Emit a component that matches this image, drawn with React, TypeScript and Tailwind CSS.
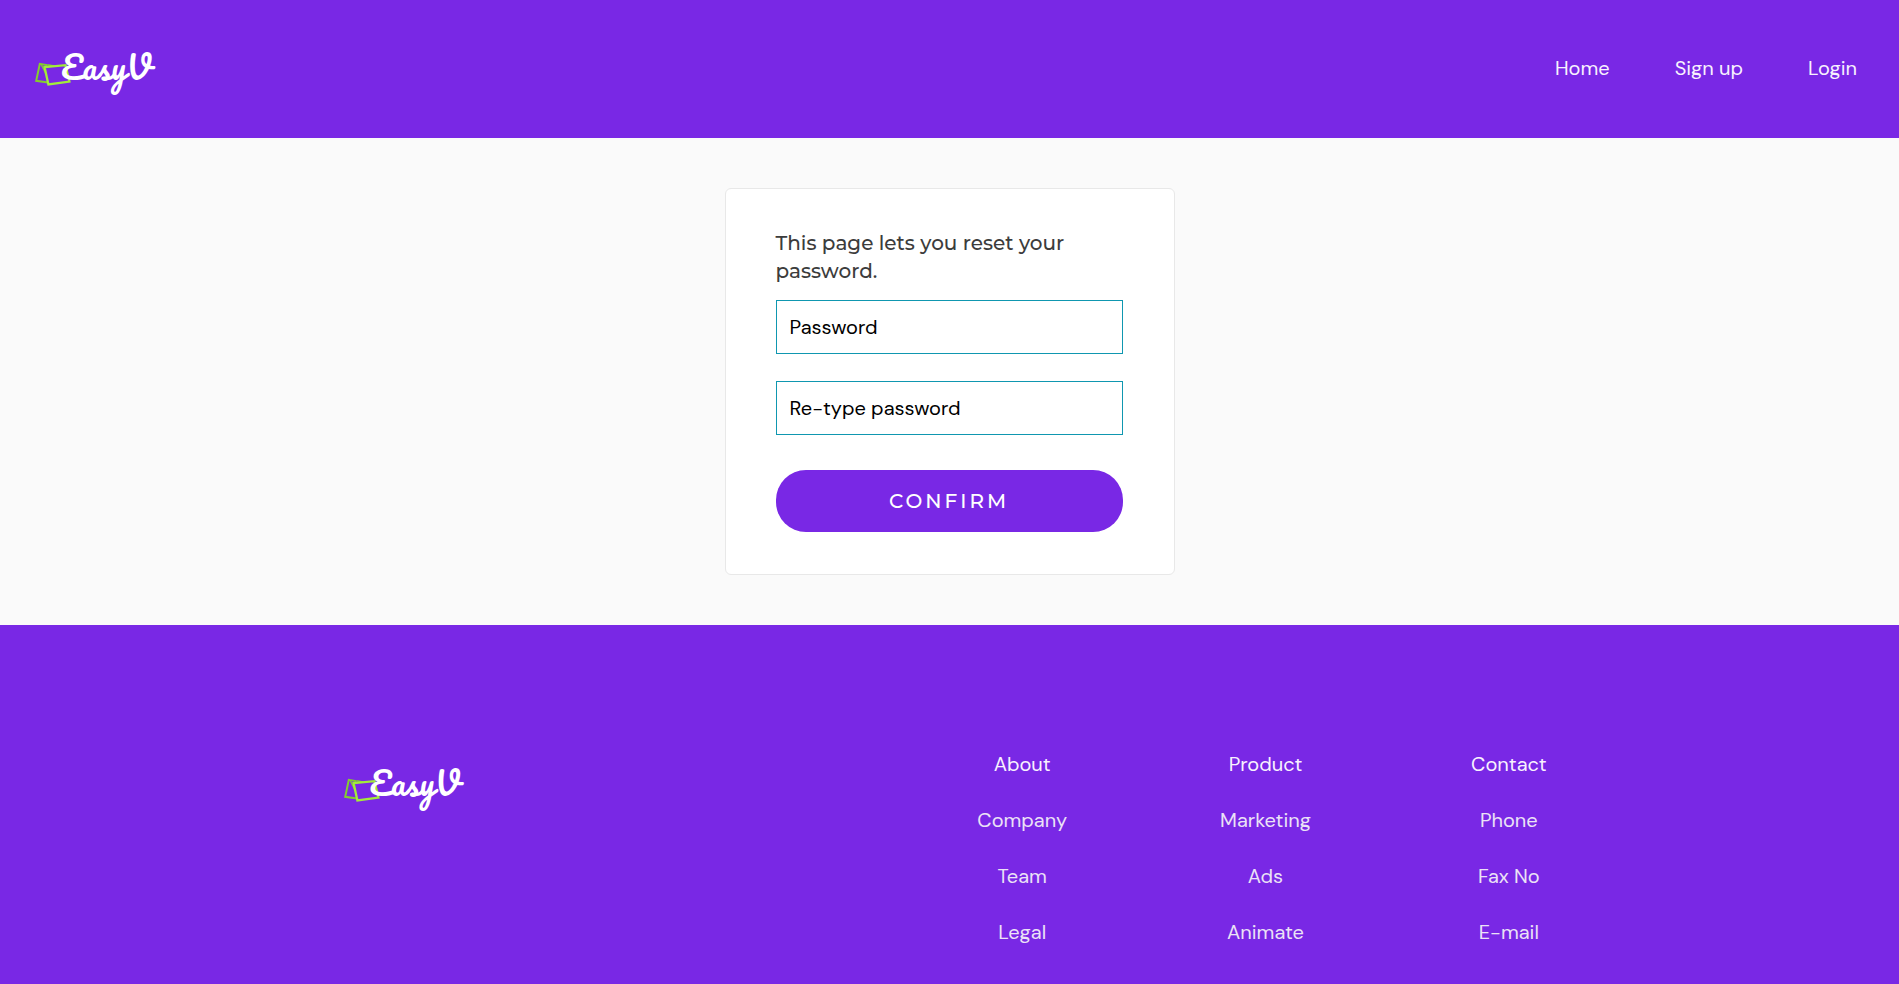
const footerColumns = [
  { title: "About", links: ["Company", "Team", "Legal"] },
  { title: "Product", links: ["Marketing", "Ads", "Animate"] },
  { title: "Contact", links: ["Phone", "Fax No", "E-mail"] },
];

const navLinks = ["Home", "Sign up", "Login"];

function Logo() {
  return (
    <a href="#" className="flex items-start">
      <svg width="36" height="24" viewBox="0 0 36 24" fill="none" className="mt-4 shrink-0" aria-hidden="true">
        <path d="M12.5 3.2 L4.8 1.8 L1.2 18.8 L13 20.4" stroke="#84cc2f" strokeWidth="2" />
        <path d="M12.5 2.8 L19 4 M6.5 3 L11 12" stroke="#84cc2f" strokeWidth="1.4" />
        <path d="M9.6 5.2 L30.5 3.2 L34.4 19.6 L13.4 22.4 Z" stroke="#a3ec3a" strokeWidth="2.3" />
      </svg>
      <span className="-ml-2.5 font-['Pacifico','Lato',cursive] text-[32px] leading-10 text-white">EasyV</span>
    </a>
  );
}

function PasswordField({ id, label }: { id: string; label: string }) {
  return (
    <input
      id={id}
      type="password"
      aria-label={label}
      placeholder={label}
      className="block h-[54px] w-full border border-[#0f97b0] bg-white px-[13px] text-xl text-black outline-none placeholder:text-black"
    />
  );
}

export default function App() {
  return (
    <div className="flex min-h-screen flex-col bg-[#fafafa] font-['DM_Sans','Inter',sans-serif]">
      <header className="flex min-h-[138px] items-start justify-between bg-[#7928e5] pl-[35px] pr-[42px] pt-[46px]">
        <Logo />
        <nav className="flex gap-[65px] pt-2 text-xl text-[#f8f2fe]">
          {navLinks.map((link) => (
            <a key={link} href="#">
              {link}
            </a>
          ))}
        </nav>
      </header>

      <main className="flex justify-center py-[50px]">
        <form className="w-full max-w-[450px] rounded-md border border-[#e8e8e8] bg-white pb-[42px] pl-[50px] pr-[51px] pt-10">
          <p className="mb-[15px] font-['Montserrat','Inter',sans-serif] text-xl font-medium leading-7 text-[#3c3c3c]">
            This page lets you reset your password.
          </p>
          <div className="flex flex-col gap-[27px]">
            <PasswordField id="password" label="Password" />
            <PasswordField id="retype-password" label="Re-type password" />
          </div>
          <button
            type="button"
            className="mt-[35px] h-[62px] w-full rounded-[30px] bg-[#7928e5] font-['Montserrat','Inter',sans-serif] text-xl font-medium tracking-[3px] text-white"
          >
            CONFIRM
          </button>
        </form>
      </main>

      <footer className="flex-1 bg-[#7928e5] pb-9 pt-[125px]">
        <div className="mx-auto flex max-w-[1362px] items-start justify-between">
          <div className="pl-[75px] pt-3">
            <Logo />
          </div>
          <div className="grid w-[730px] grid-cols-3 text-center text-xl text-[#ebe2f6]">
            {footerColumns.map((column) => (
              <ul key={column.title} className="flex flex-col gap-7">
                <li>
                  <a href="#" className="text-[#f8f2fe]">
                    {column.title}
                  </a>
                </li>
                {column.links.map((link) => (
                  <li key={link}>
                    <a href="#">{link}</a>
                  </li>
                ))}
              </ul>
            ))}
          </div>
        </div>
      </footer>
    </div>
  );
}
